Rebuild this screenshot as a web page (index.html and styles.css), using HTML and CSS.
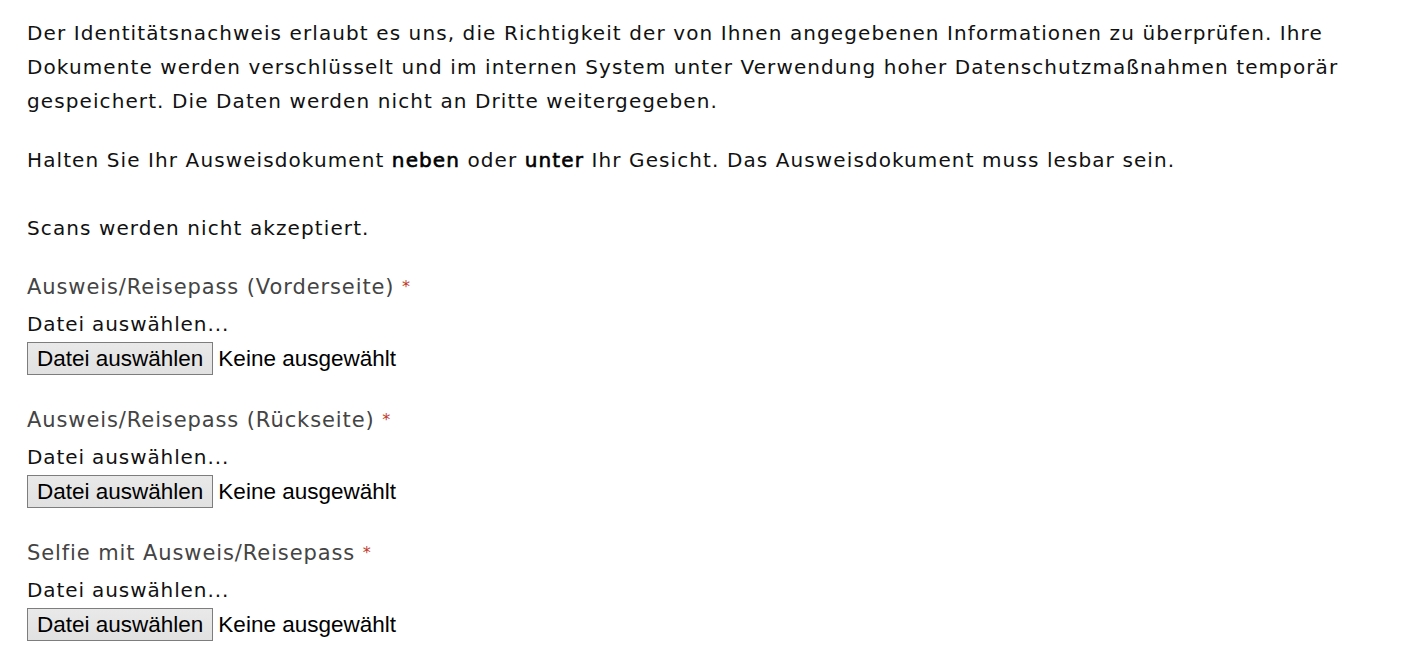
FILE: index.html
```html
<!DOCTYPE html>
<html lang="de">
<head>
<meta charset="utf-8">
<title>Identitätsnachweis</title>
<link rel="stylesheet" href="styles.css">
</head>
<body>
<div class="content">
  <p class="text">Der Identitätsnachweis erlaubt es uns, die Richtigkeit der von Ihnen angegebenen Informationen zu überprüfen. Ihre Dokumente werden verschlüsselt und im internen System unter Verwendung hoher Datenschutzmaßnahmen temporär gespeichert. Die Daten werden nicht an Dritte weitergegeben.</p>
  <p class="text">Halten Sie Ihr Ausweisdokument <strong>neben</strong> oder <strong>unter</strong> Ihr Gesicht. Das Ausweisdokument muss lesbar sein.<br><br>Scans werden nicht akzeptiert.</p>

  <div class="field">
    <div class="label">Ausweis/Reisepass (Vorderseite) <span class="req">*</span></div>
    <div class="hint">Datei auswählen...</div>
    <div class="file"><button class="file-btn" type="button">Datei auswählen</button><span class="file-name">Keine ausgewählt</span></div>
  </div>

  <div class="field">
    <div class="label">Ausweis/Reisepass (Rückseite) <span class="req">*</span></div>
    <div class="hint">Datei auswählen...</div>
    <div class="file"><button class="file-btn" type="button">Datei auswählen</button><span class="file-name">Keine ausgewählt</span></div>
  </div>

  <div class="field">
    <div class="label">Selfie mit Ausweis/Reisepass <span class="req">*</span></div>
    <div class="hint">Datei auswählen...</div>
    <div class="file"><button class="file-btn" type="button">Datei auswählen</button><span class="file-name">Keine ausgewählt</span></div>
  </div>
</div>
</body>
</html>
```

FILE: styles.css
```css
html, body {
  margin: 0;
  padding: 0;
  background: #ffffff;
}

body {
  font-family: "DejaVu Sans", sans-serif;
  color: #111111;
  font-size: 20px;
}

.content {
  padding: 16px 27px 0 27px;
}

.text {
  margin: 0 0 25px 0;
  line-height: 34px;
  font-size: 20px;
  letter-spacing: 1.1px;
}

.text strong {
  font-weight: normal;
  color: #000000;
  -webkit-text-stroke: 0.6px #000000;
}

.field {
  display: flex;
  flex-direction: column;
  align-items: flex-start;
  margin-bottom: 28px;
}

.label {
  font-size: 21px;
  line-height: 34px;
  height: 34px;
  color: #444444;
  letter-spacing: 0.9px;
}

.req {
  color: #c0392b;
  font-size: 16px;
  line-height: 1;
  vertical-align: 2px;
}

.hint {
  margin-top: 3px;
  line-height: 34px;
  height: 34px;
  font-size: 20px;
  letter-spacing: 0.9px;
  color: #111111;
}

.file {
  margin-top: 1px;
  display: flex;
  align-items: center;
  font-family: "Liberation Sans", Arial, sans-serif;
  font-size: 22.5px;
  color: #000000;
}

.file-btn {
  font-family: "Liberation Sans", Arial, sans-serif;
  font-size: 22.5px;
  height: 33px;
  padding: 0 9px;
  margin: 0 5px 0 0;
  background: linear-gradient(#e9e9e9, #e1e1e1);
  border: 1px solid #7d7d7d;
  border-radius: 0;
  color: #000000;
  line-height: 31px;
}
```
